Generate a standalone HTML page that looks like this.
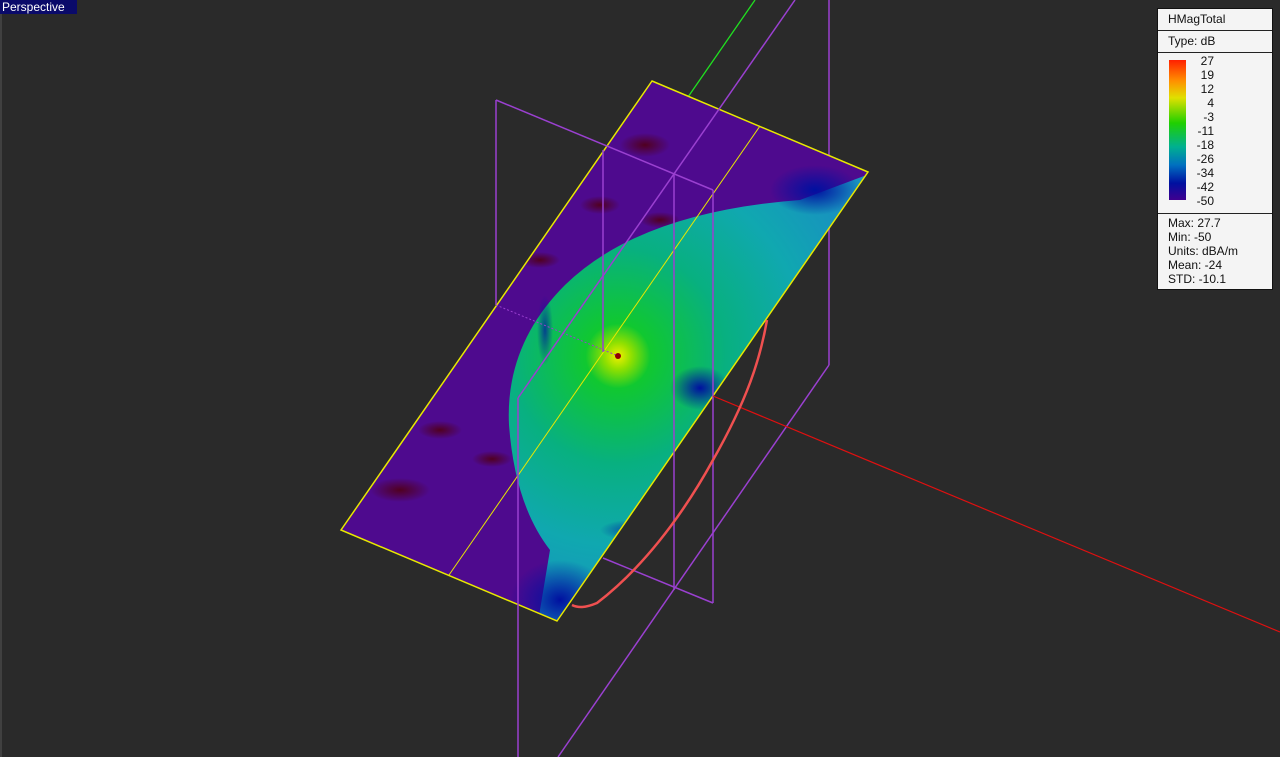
<!DOCTYPE html>
<html><head><meta charset="utf-8"><style>
html,body{margin:0;padding:0;background:#2a2a2a;width:1280px;height:757px;overflow:hidden;font-family:"Liberation Sans",Arial,sans-serif}
#lbl{position:absolute;left:0;top:0;width:77px;height:14px;background:#0a0a6a;color:#fff;font-size:12px;line-height:14px;padding-left:2px;box-sizing:border-box}
#lg{position:absolute;left:1157px;top:8px;width:116px;height:282px;background:#f4f4f4;border:1px solid #111;box-sizing:border-box;font-size:12px;color:#111}
#lg .s{border-bottom:1px solid #222;padding-left:10px}
.nums{position:absolute;left:0;width:56px;text-align:right;line-height:14px}
</style></head><body>
<svg width="1280" height="757" style="position:absolute;left:0;top:0">
<defs>
<clipPath id="pl"><polygon points="652,81 868,172 557,621 341,530"/></clipPath>
<radialGradient id="gc" cx="618" cy="356" r="270" gradientUnits="userSpaceOnUse">
<stop offset="0" stop-color="#f0f000"/><stop offset="0.05" stop-color="#90e000"/><stop offset="0.12" stop-color="#10c830"/><stop offset="0.4" stop-color="#08b080"/><stop offset="0.7" stop-color="#10a8b0"/><stop offset="1" stop-color="#1890c0"/></radialGradient>
<radialGradient id="db" cx="0.5" cy="0.5" r="0.5"><stop offset="0" stop-color="#0010a0"/><stop offset="1" stop-color="#0010a0" stop-opacity="0"/></radialGradient>
<radialGradient id="mr" cx="0.5" cy="0.5" r="0.5"><stop offset="0" stop-color="#500020"/><stop offset="1" stop-color="#500020" stop-opacity="0"/></radialGradient>
</defs>
<line x1="1" y1="0" x2="1" y2="757" stroke="#555"/>
<line x1="755" y1="0" x2="688" y2="97" stroke="#20e020" stroke-width="1.3"/>
<g stroke="#9a40d0" stroke-width="1.5" fill="none">
<line x1="829" y1="0" x2="829" y2="365"/><line x1="829" y1="365" x2="558" y2="757"/>
<line x1="496" y1="100" x2="496" y2="305"/>
</g>
<g clip-path="url(#pl)">
<rect x="330" y="70" width="560" height="560" fill="#4e0a8e"/>
<ellipse cx="400" cy="490" rx="30" ry="12" fill="url(#mr)"/><ellipse cx="440" cy="430" rx="22" ry="9" fill="url(#mr)"/><ellipse cx="492" cy="459" rx="20" ry="8" fill="url(#mr)"/><ellipse cx="600" cy="205" rx="20" ry="9" fill="url(#mr)"/><ellipse cx="645" cy="145" rx="25" ry="12" fill="url(#mr)"/><ellipse cx="660" cy="220" rx="20" ry="8" fill="url(#mr)"/><ellipse cx="540" cy="260" rx="20" ry="8" fill="url(#mr)"/>
<path d="M880,170 L800,200 Q640,212 565,285 Q505,345 509,425 Q515,505 550,550 L535,640 L900,640 Z" fill="url(#gc)"/>
<ellipse cx="815" cy="190" rx="45" ry="25" fill="url(#db)"/>
<ellipse cx="560" cy="600" rx="50" ry="40" fill="url(#db)"/>
<ellipse cx="700" cy="388" rx="30" ry="22" fill="url(#db)"/>
<ellipse cx="630" cy="530" rx="30" ry="10" fill="url(#db)" opacity="0.6"/>
<ellipse cx="545" cy="330" rx="8" ry="35" fill="url(#db)" opacity="0.7"/>
</g>
<g stroke="#e8e800" fill="none"><polygon points="652,81 868,172 557,621 341,530" stroke-width="1.5"/><line x1="449" y1="575" x2="760" y2="126" stroke-width="1"/></g>
<g stroke="#9a40d0" stroke-width="1.5" fill="none">
<line x1="496" y1="100" x2="713" y2="190"/>
<line x1="518" y1="398" x2="518" y2="757"/><line x1="603" y1="558" x2="713" y2="603"/>
<line x1="713" y1="190" x2="713" y2="603"/><line x1="674" y1="174" x2="674" y2="590"/>
<line x1="795" y1="0" x2="518" y2="398"/><line x1="603" y1="150" x2="603" y2="352"/>
<line x1="496" y1="305" x2="618" y2="356" stroke-width="1" stroke-dasharray="2 2"/>
</g>
<line x1="713" y1="396" x2="1280" y2="632" stroke="#e01010" stroke-width="1.2"/>
<path d="M767,320 C760,360 747,400 713,460 C680,520 640,570 597,603 C585,608 578,608 572,605" stroke="#f05050" stroke-width="2.5" fill="none"/>
<circle cx="618" cy="356" r="3" fill="#900000"/>
</svg>
<div id="lbl">Perspective</div>
<div id="lg">
<div class="s" style="height:21px;line-height:20px">HMagTotal</div>
<div class="s" style="height:21px;line-height:20px">Type: dB</div>
<div class="s" style="height:160px;position:relative">
<div style="position:absolute;left:11px;top:7px;width:17px;height:140px;background:linear-gradient(#ff2000,#ff9000 15%,#e0e000 27%,#20d000 45%,#00b090 62%,#0070c0 75%,#0010a0 88%,#400090)"></div>
<div class="nums" style="top:1px">27<br>19<br>12<br>4<br>-3<br>-11<br>-18<br>-26<br>-34<br>-42<br>-50</div></div>
<div style="padding-left:10px;line-height:14px;padding-top:2px">Max: 27.7<br>Min: -50<br>Units: dBA/m<br>Mean: -24<br>STD: -10.1</div>
</div>
</body></html>
